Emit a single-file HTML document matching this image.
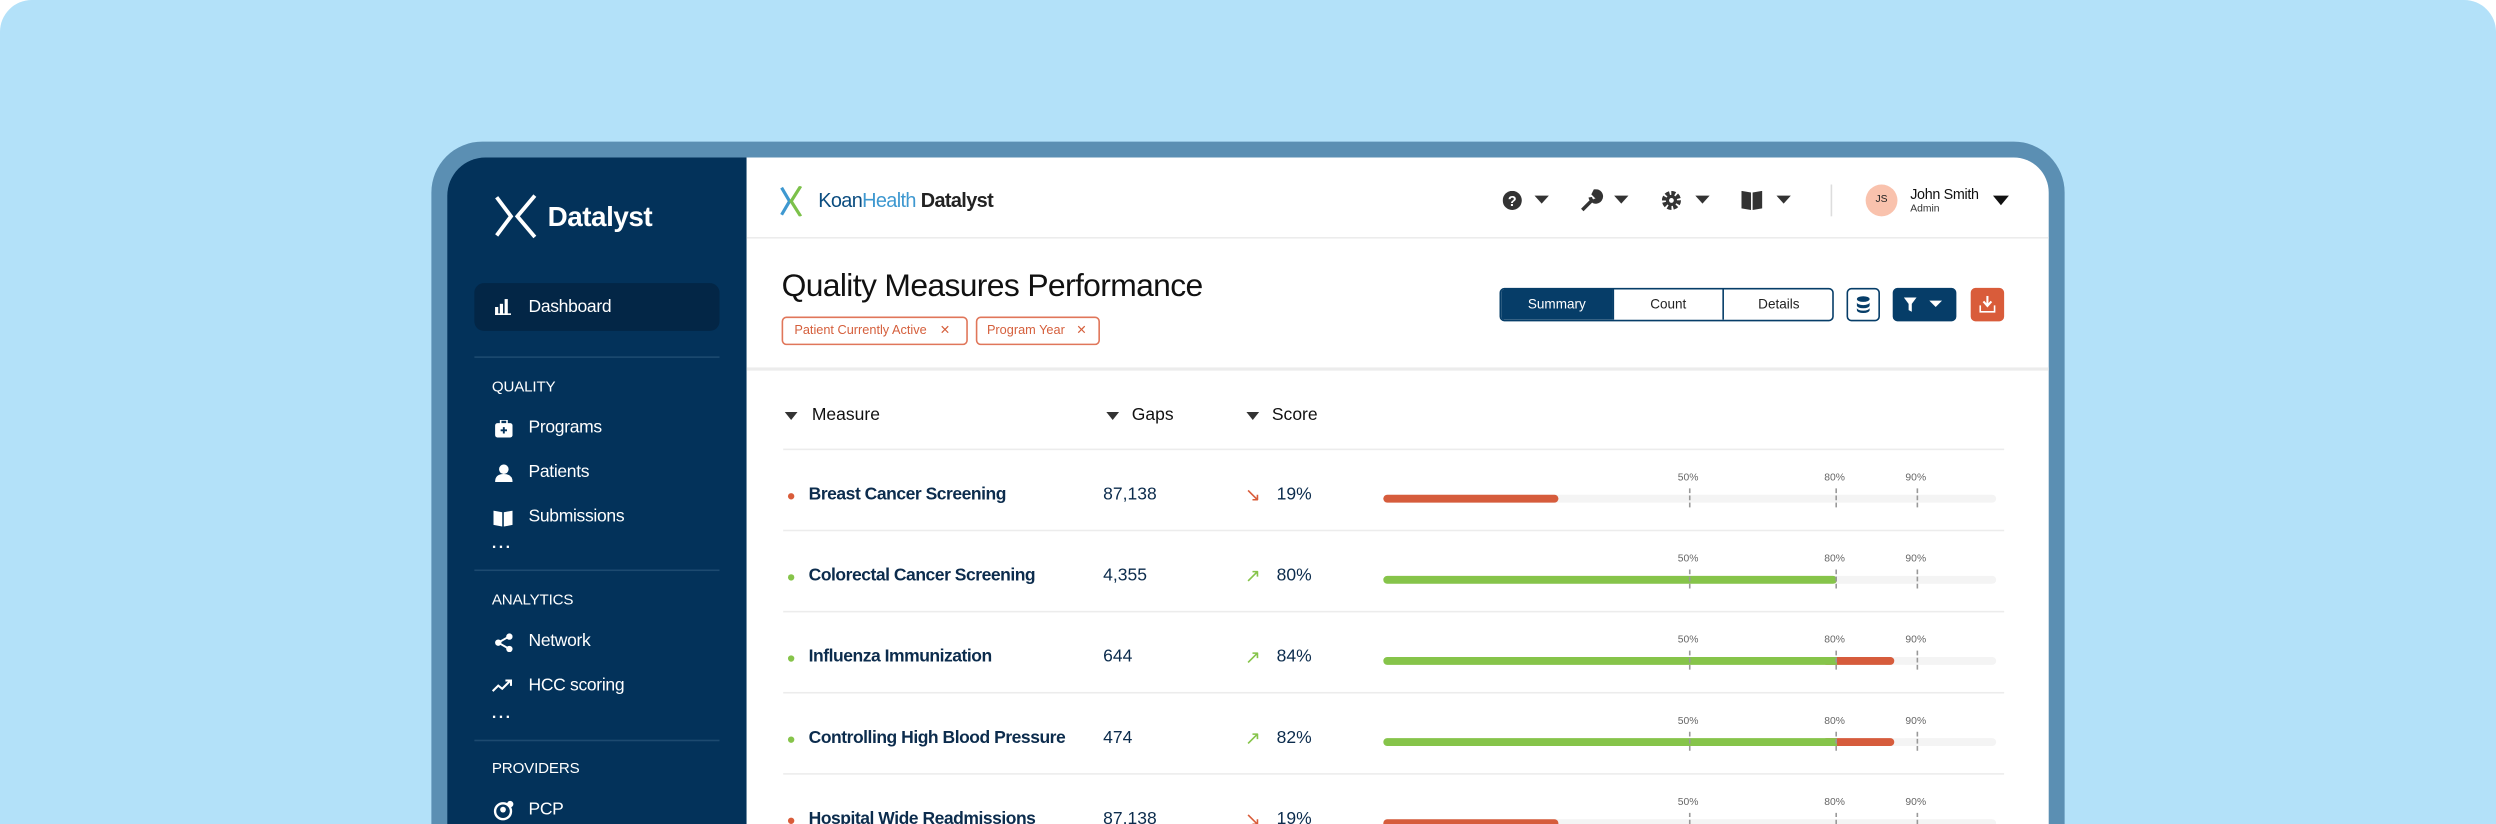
<!DOCTYPE html>
<html><head><meta charset="utf-8"><style>
*{margin:0;padding:0;box-sizing:border-box}
html,body{width:2496px;height:824px;overflow:hidden;background:#fff}
#s{position:absolute;left:0;top:0;width:1568px;height:518px;overflow:hidden;transform:scale(1.59184,1.5907);transform-origin:0 0;font-family:"Liberation Sans",sans-serif;background:#b3e1f9;border-radius:20px 20px 0 0}
.a{position:absolute;white-space:nowrap}
.frame{left:271px;top:89px;width:1026px;height:480px;background:#5b8fb3;border-radius:32px}
.side{left:281px;top:99px;width:188px;height:419px;background:#03325a;border-radius:24px 0 0 0}
.main{left:469px;top:99px;width:818px;height:419px;background:#fff;border-radius:0 22px 0 0}
.st{color:#fff;font-size:11px;letter-spacing:-0.2px}
.sh{color:#fff;font-size:9.5px;letter-spacing:-0.1px}
.dv{height:1px;background:#1d4a70;left:298px;width:154px}
.dots{color:#fff;font-size:10px;letter-spacing:1px;font-weight:bold}
.hl{height:1px;background:#ececec}
.name{color:#0c2c4d;font-size:11px;font-weight:bold;letter-spacing:-0.3px}
.num{color:#0c2c4d;font-size:11px}
.dot{width:4px;height:4px;border-radius:2px}
.track{left:869px;width:385px;height:5px;background:#f4f4f4;border-radius:3px}
.bar{height:5px;border-radius:3px}
.pl{font-size:6.5px;color:#666}
.mk{width:1px;border-left:1px dashed #999;height:12px}
.th{font-size:11px;color:#111}
.tri{width:0;height:0;border-left:4px solid transparent;border-right:4px solid transparent;border-top:5px solid #333}
</style></head><body><div id="s">
<div class="a frame"></div>
<div class="a side"></div>
<div class="a main"></div>

<svg class="a" style="left:310px;top:122px" width="28" height="28" viewBox="0 0 28 28"><path d="M2 2 L11 14 L2 26" fill="none" stroke="#fff" stroke-width="2.4"/><path d="M26 1 L15 14 L26 27" fill="none" stroke="#fff" stroke-width="2.4"/></svg>
<div class="a" style="left:344px;top:126px;color:#fff;font-size:17.5px;font-weight:bold;letter-spacing:-0.3px">Datalyst</div>
<div class="a" style="left:298px;top:178px;width:154px;height:30px;background:#032646;border-radius:6px"></div>
<svg class="a" style="left:311px;top:188px" width="10" height="10"><rect x="0" y="5" width="2" height="5" fill="#fff"/><rect x="3" y="3" width="2" height="7" fill="#fff"/><rect x="6" y="0" width="2" height="10" fill="#fff"/><rect x="0" y="9" width="10" height="1" fill="#fff"/></svg>
<div class="a st" style="left:332px;top:187px">Dashboard</div>
<div class="a dv" style="top:224px"></div>
<div class="a sh" style="left:309px;top:238px">QUALITY</div>
<svg class="a" style="left:311px;top:264px" width="11" height="11"><rect x="0" y="2" width="11" height="9" rx="1.5" fill="#fff"/><rect x="3.5" y="0" width="4" height="3" fill="none" stroke="#fff"/><path d="M5.5 4.5v4M3.5 6.5h4" stroke="#03325a" stroke-width="1.2"/></svg>
<div class="a st" style="left:332px;top:263px">Programs</div>
<svg class="a" style="left:311px;top:292px" width="11" height="11"><circle cx="5.5" cy="3" r="3" fill="#fff"/><path d="M0 11 Q0 6 5.5 6 Q11 6 11 11Z" fill="#fff"/></svg>
<div class="a st" style="left:332px;top:291px">Patients</div>
<svg class="a" style="left:310px;top:321px" width="12" height="10"><path d="M0 0 L5.5 1 L5.5 10 L0 9Z M6.5 1 L12 0 L12 9 L6.5 10Z" fill="#fff"/></svg>
<div class="a st" style="left:332px;top:319px">Submissions</div>
<div class="a dots" style="left:309px;top:339px">···</div>
<div class="a dv" style="top:358px"></div>
<div class="a sh" style="left:309px;top:372px">ANALYTICS</div>
<svg class="a" style="left:311px;top:398px" width="11" height="12"><circle cx="9" cy="2.2" r="2" fill="#fff"/><circle cx="2" cy="6" r="2" fill="#fff"/><circle cx="9" cy="10" r="2" fill="#fff"/><path d="M9 2 L2 6 L9 10" stroke="#fff" fill="none" stroke-width="1.2"/></svg>
<div class="a st" style="left:332px;top:397px">Network</div>
<svg class="a" style="left:309px;top:427px" width="13" height="9"><path d="M0.5 7.5 L4 4 L6.5 6 L11.5 1" stroke="#fff" fill="none" stroke-width="1.3"/><path d="M8.5 0.8 H12 V4.2" stroke="#fff" fill="none" stroke-width="1.3"/></svg>
<div class="a st" style="left:332px;top:425px">HCC scoring</div>
<div class="a dots" style="left:309px;top:446px">···</div>
<div class="a dv" style="top:465px"></div>
<div class="a sh" style="left:309px;top:478px">PROVIDERS</div>
<svg class="a" style="left:310px;top:503px" width="13" height="13"><circle cx="6" cy="7" r="5" fill="none" stroke="#fff" stroke-width="1.5"/><circle cx="6" cy="6" r="1.8" fill="#fff"/><circle cx="10.5" cy="2.5" r="2" fill="#fff"/></svg>
<div class="a st" style="left:332px;top:503px">PCP</div>

<svg class="a" style="left:490px;top:117px" width="22" height="19"><path d="M1 1 L6 9.5 L1 18" stroke="#3e98d0" stroke-width="2" fill="none"/><path d="M13 0 L7 9.5 L13 19" stroke="#7cc14a" stroke-width="2" fill="none"/></svg>
<div class="a" style="left:514px;top:119px;font-size:12.5px;letter-spacing:-0.4px"><span style="color:#0b4d80">Koan</span><span style="color:#3e98d0">Health</span> <b style="color:#222">Datalyst</b></div>
<div class="a hl" style="left:469px;top:149px;width:818px"></div>
<svg class="a" style="left:944px;top:120px" width="34" height="12"><circle cx="6" cy="6" r="6" fill="#333"/><text x="6" y="9.5" font-size="9" font-weight="bold" text-anchor="middle" fill="#fff" font-family="Liberation Sans">?</text><path d="M20 3 h9 l-4.5 5z" fill="#333"/></svg>
<svg class="a" style="left:993px;top:119px" width="34" height="14"><path d="M1 13 L7 7 M6 5 a3.5 3.5 0 1 0 3 -4 l-1 2 l2 2 l2-1 a3.5 3.5 0 0 1 -4 3" stroke="#333" stroke-width="2.2" fill="#333"/><path d="M21 4 h9 l-4.5 5z" fill="#333"/></svg>
<svg class="a" style="left:1044px;top:120px" width="34" height="12"><circle cx="6" cy="6" r="4.5" fill="none" stroke="#333" stroke-width="3" stroke-dasharray="2.4 1.1"/><circle cx="6" cy="6" r="3.5" fill="#333"/><circle cx="6" cy="6" r="1.5" fill="#fff"/><path d="M21 3 h9 l-4.5 5z" fill="#333"/></svg>
<svg class="a" style="left:1094px;top:120px" width="34" height="12"><path d="M0 0 L6 1 L6 12 L0 11Z M7 1 L13 0 L13 11 L7 12Z" fill="#333"/><path d="M22 3 h9 l-4.5 5z" fill="#333"/></svg>
<div class="a" style="left:1150px;top:116px;width:1px;height:20px;background:#ddd"></div>
<div class="a" style="left:1172px;top:116px;width:20px;height:20px;border-radius:10px;background:#f9c2ad;font-size:6.5px;color:#222;text-align:center;line-height:20px">JS</div>
<div class="a" style="left:1200px;top:117px;font-size:9px;color:#111;letter-spacing:-0.2px">John Smith</div>
<div class="a" style="left:1200px;top:128px;font-size:6.5px;color:#333">Admin</div>
<div class="a tri" style="left:1252px;top:123px;border-top-color:#111;border-left-width:5px;border-right-width:5px;border-top-width:6px"></div>

<div class="a" style="left:491px;top:169px;font-size:20px;color:#111;letter-spacing:-0.4px">Quality Measures Performance</div>
<div class="a" style="left:491px;top:199px;width:117px;height:18px;border:1px solid #e0765a;border-radius:3px;color:#d55f3c;font-size:8px;line-height:16px;padding-left:7px">Patient Currently Active <span style="margin-left:6px">✕</span></div>
<div class="a" style="left:613px;top:199px;width:78px;height:18px;border:1px solid #e0765a;border-radius:3px;color:#d55f3c;font-size:8px;line-height:16px;padding-left:6px">Program Year <span style="margin-left:5px">✕</span></div>

<div class="a" style="left:942px;top:181px;width:210px;height:21px;border:1px solid #063d68;border-radius:3px;overflow:hidden;font-size:8.5px;color:#222;line-height:19px;text-align:center">
<div class="a" style="left:0;top:0;width:70px;height:19px;background:#063d68;color:#fff">Summary</div>
<div class="a" style="left:70px;top:0;width:69px;height:19px;border-left:1px solid #063d68">Count</div>
<div class="a" style="left:139px;top:0;width:70px;height:19px;border-left:1px solid #063d68">Details</div>
</div>
<div class="a" style="left:1160px;top:181px;width:21px;height:21px;border:1px solid #063d68;border-radius:3px"></div>
<svg class="a" style="left:1166px;top:186px" width="9" height="11"><ellipse cx="4.5" cy="2" rx="4" ry="1.8" fill="#063d68"/><path d="M0.5 4 v2 a4 1.8 0 0 0 8 0 v-2 a4 1.8 0 0 1 -8 0Z M0.5 7.5 v1.5 a4 1.8 0 0 0 8 0 v-1.5 a4 1.8 0 0 1 -8 0Z" fill="#063d68"/></svg>
<div class="a" style="left:1189px;top:181px;width:40px;height:21px;background:#063d68;border-radius:3px"></div>
<svg class="a" style="left:1196px;top:187px" width="28" height="10"><path d="M0 0 h8 l-3 4 v5 l-2 -1 v-4Z" fill="#fff"/><path d="M16 2 h8 l-4 4z" fill="#fff"/></svg>
<div class="a" style="left:1238px;top:181px;width:21px;height:21px;background:#d95c3a;border-radius:3px"></div>
<svg class="a" style="left:1243px;top:186px" width="11" height="11"><path d="M5.5 0 v6 M3 3.5 l2.5 2.8 l2.5-2.8" stroke="#fff" stroke-width="1.3" fill="none"/><path d="M1 6 v4 h9 v-4" stroke="#fff" stroke-width="1" fill="none"/></svg>
<div class="a hl" style="left:469px;top:231px;width:818px;height:1.5px"></div>

<div class="a tri" style="left:493px;top:259px"></div><div class="a th" style="left:510px;top:255px">Measure</div>
<div class="a tri" style="left:695px;top:259px"></div><div class="a th" style="left:711px;top:255px">Gaps</div>
<div class="a tri" style="left:783px;top:259px"></div><div class="a th" style="left:799px;top:255px">Score</div>
<div class="a hl" style="left:492px;top:282px;width:767px"></div>

<div class="a dot" style="left:495px;top:310px;background:#d95c3a"></div>
<div class="a name" style="left:508px;top:305px">Breast Cancer Screening</div>
<div class="a num" style="left:693px;top:305px">87,138</div>
<div class="a" style="left:782px;top:304px;color:#d95c3a;font-size:12px">↘</div>
<div class="a num" style="left:802px;top:305px">19%</div>
<div class="a track" style="top:311px"></div><div class="a bar" style="left:869px;top:311px;width:110px;background:#d65c3c"></div>
<div class="a hl" style="left:492px;top:333px;width:767px"></div>

<div class="a dot" style="left:495px;top:361px;background:#86c44a"></div>
<div class="a name" style="left:508px;top:356px">Colorectal Cancer Screening</div>
<div class="a num" style="left:693px;top:356px">4,355</div>
<div class="a" style="left:782px;top:355px;color:#86c44a;font-size:12px">↗</div>
<div class="a num" style="left:802px;top:356px">80%</div>
<div class="a track" style="top:362px"></div><div class="a bar" style="left:869px;top:362px;width:285px;background:#86c44a"></div>
<div class="a hl" style="left:492px;top:384px;width:767px"></div>

<div class="a dot" style="left:495px;top:412px;background:#86c44a"></div>
<div class="a name" style="left:508px;top:407px">Influenza Immunization</div>
<div class="a num" style="left:693px;top:407px">644</div>
<div class="a" style="left:782px;top:406px;color:#86c44a;font-size:12px">↗</div>
<div class="a num" style="left:802px;top:407px">84%</div>
<div class="a track" style="top:413px"></div><div class="a bar" style="left:1145px;top:413px;width:45px;background:#d65c3c"></div><div class="a bar" style="left:869px;top:413px;width:285px;background:#86c44a;border-radius:3px 0 0 3px"></div>
<div class="a hl" style="left:492px;top:435px;width:767px"></div>

<div class="a dot" style="left:495px;top:463px;background:#86c44a"></div>
<div class="a name" style="left:508px;top:458px">Controlling High Blood Pressure</div>
<div class="a num" style="left:693px;top:458px">474</div>
<div class="a" style="left:782px;top:457px;color:#86c44a;font-size:12px">↗</div>
<div class="a num" style="left:802px;top:458px">82%</div>
<div class="a track" style="top:464px"></div><div class="a bar" style="left:1145px;top:464px;width:45px;background:#d65c3c"></div><div class="a bar" style="left:869px;top:464px;width:285px;background:#86c44a;border-radius:3px 0 0 3px"></div>
<div class="a hl" style="left:492px;top:486px;width:767px"></div>

<div class="a dot" style="left:495px;top:514px;background:#d95c3a"></div>
<div class="a name" style="left:508px;top:509px">Hospital Wide Readmissions</div>
<div class="a num" style="left:693px;top:509px">87,138</div>
<div class="a" style="left:782px;top:508px;color:#d95c3a;font-size:12px">↘</div>
<div class="a num" style="left:802px;top:509px">19%</div>
<div class="a track" style="top:515px"></div><div class="a bar" style="left:869px;top:515px;width:110px;background:#d65c3c"></div>

<div class="a pl" style="left:1054px;top:297px">50%</div><div class="a pl" style="left:1146px;top:297px">80%</div><div class="a pl" style="left:1197px;top:297px">90%</div>
<div class="a mk" style="left:1061px;top:307px"></div><div class="a mk" style="left:1153px;top:307px"></div><div class="a mk" style="left:1204px;top:307px"></div>
<div class="a pl" style="left:1054px;top:348px">50%</div><div class="a pl" style="left:1146px;top:348px">80%</div><div class="a pl" style="left:1197px;top:348px">90%</div>
<div class="a mk" style="left:1061px;top:358px"></div><div class="a mk" style="left:1153px;top:358px"></div><div class="a mk" style="left:1204px;top:358px"></div>
<div class="a pl" style="left:1054px;top:399px">50%</div><div class="a pl" style="left:1146px;top:399px">80%</div><div class="a pl" style="left:1197px;top:399px">90%</div>
<div class="a mk" style="left:1061px;top:409px"></div><div class="a mk" style="left:1153px;top:409px"></div><div class="a mk" style="left:1204px;top:409px"></div>
<div class="a pl" style="left:1054px;top:450px">50%</div><div class="a pl" style="left:1146px;top:450px">80%</div><div class="a pl" style="left:1197px;top:450px">90%</div>
<div class="a mk" style="left:1061px;top:460px"></div><div class="a mk" style="left:1153px;top:460px"></div><div class="a mk" style="left:1204px;top:460px"></div>
<div class="a pl" style="left:1054px;top:501px">50%</div><div class="a pl" style="left:1146px;top:501px">80%</div><div class="a pl" style="left:1197px;top:501px">90%</div>
<div class="a mk" style="left:1061px;top:511px;height:7px"></div><div class="a mk" style="left:1153px;top:511px;height:7px"></div><div class="a mk" style="left:1204px;top:511px;height:7px"></div>
</div></body></html>
